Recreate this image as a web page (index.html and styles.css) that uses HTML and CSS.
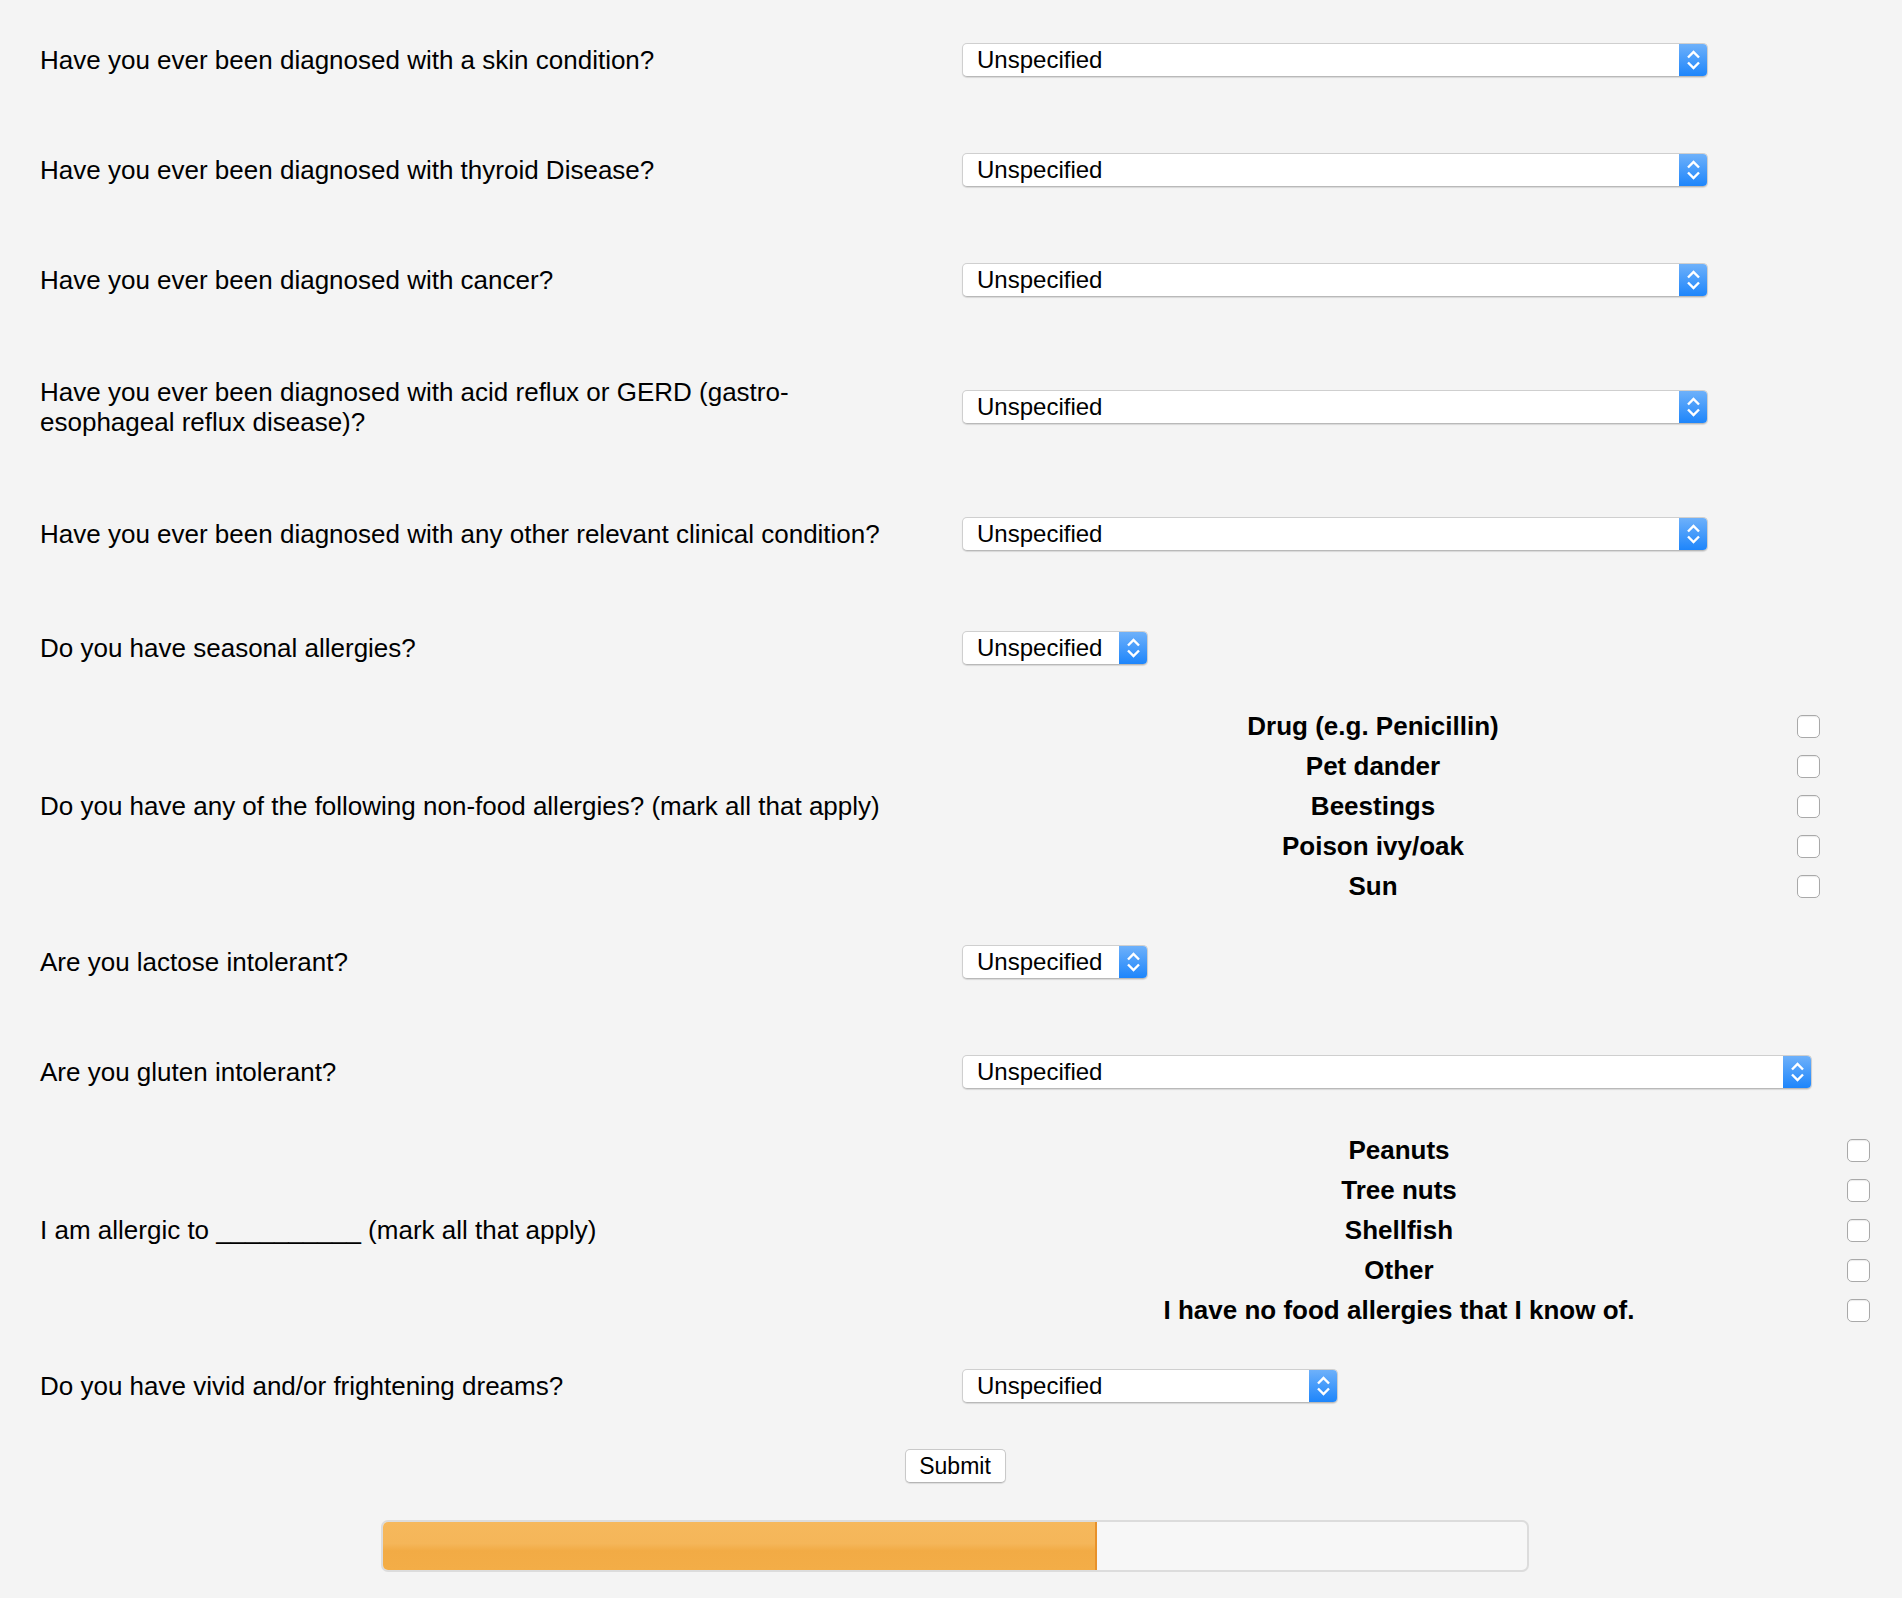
FILE: index.html
```html
<!DOCTYPE html>
<html lang="en">
<head>
<meta charset="utf-8">
<title>Health questionnaire</title>
<link rel="stylesheet" href="styles.css">
</head>
<body>
<div class="page">
  <form class="survey">
    <div class="q">
      <div class="q-label">Have you ever been diagnosed with a skin condition?</div>
      <div class="select select--full"><span class="select-text">Unspecified</span><span class="select-btn"><svg width="29" height="34" viewBox="0 0 29 34"><path d="M9 14.5 L14.5 9 L20 14.5 M9 19.5 L14.5 25 L20 19.5" fill="none" stroke="#fff" stroke-width="2.4"/></svg></span></div>
    </div>
    <div class="q">
      <div class="q-label">Have you ever been diagnosed with thyroid Disease?</div>
      <div class="select select--full"><span class="select-text">Unspecified</span><span class="select-btn"><svg width="29" height="34" viewBox="0 0 29 34"><path d="M9 14.5 L14.5 9 L20 14.5 M9 19.5 L14.5 25 L20 19.5" fill="none" stroke="#fff" stroke-width="2.4"/></svg></span></div>
    </div>
    <div class="q">
      <div class="q-label">Have you ever been diagnosed with cancer?</div>
      <div class="select select--full"><span class="select-text">Unspecified</span><span class="select-btn"><svg width="29" height="34" viewBox="0 0 29 34"><path d="M9 14.5 L14.5 9 L20 14.5 M9 19.5 L14.5 25 L20 19.5" fill="none" stroke="#fff" stroke-width="2.4"/></svg></span></div>
    </div>
    <div class="q q--loose">
      <div class="q-label">Have you ever been diagnosed with acid reflux or GERD (gastro-esophageal reflux disease)?</div>
      <div class="select select--full"><span class="select-text">Unspecified</span><span class="select-btn"><svg width="29" height="34" viewBox="0 0 29 34"><path d="M9 14.5 L14.5 9 L20 14.5 M9 19.5 L14.5 25 L20 19.5" fill="none" stroke="#fff" stroke-width="2.4"/></svg></span></div>
    </div>
    <div class="q q--loose">
      <div class="q-label">Have you ever been diagnosed with any other relevant clinical condition?</div>
      <div class="select select--full"><span class="select-text">Unspecified</span><span class="select-btn"><svg width="29" height="34" viewBox="0 0 29 34"><path d="M9 14.5 L14.5 9 L20 14.5 M9 19.5 L14.5 25 L20 19.5" fill="none" stroke="#fff" stroke-width="2.4"/></svg></span></div>
    </div>
    <div class="q q--loose">
      <div class="q-label">Do you have seasonal allergies?</div>
      <div class="select select--short"><span class="select-text">Unspecified</span><span class="select-btn"><svg width="29" height="34" viewBox="0 0 29 34"><path d="M9 14.5 L14.5 9 L20 14.5 M9 19.5 L14.5 25 L20 19.5" fill="none" stroke="#fff" stroke-width="2.4"/></svg></span></div>
    </div>
    <div class="q q--checks">
      <div class="q-label">Do you have any of the following non-food allergies? (mark all that apply)</div>
      <div class="checks checks--nonfood">
        <span class="check-label">Drug (e.g. Penicillin)</span><span class="box"></span>
        <span class="check-label">Pet dander</span><span class="box"></span>
        <span class="check-label">Beestings</span><span class="box"></span>
        <span class="check-label">Poison ivy/oak</span><span class="box"></span>
        <span class="check-label">Sun</span><span class="box"></span>
      </div>
    </div>
    <div class="q">
      <div class="q-label">Are you lactose intolerant?</div>
      <div class="select select--short"><span class="select-text">Unspecified</span><span class="select-btn"><svg width="29" height="34" viewBox="0 0 29 34"><path d="M9 14.5 L14.5 9 L20 14.5 M9 19.5 L14.5 25 L20 19.5" fill="none" stroke="#fff" stroke-width="2.4"/></svg></span></div>
    </div>
    <div class="q">
      <div class="q-label">Are you gluten intolerant?</div>
      <div class="select select--wide"><span class="select-text">Unspecified</span><span class="select-btn"><svg width="29" height="34" viewBox="0 0 29 34"><path d="M9 14.5 L14.5 9 L20 14.5 M9 19.5 L14.5 25 L20 19.5" fill="none" stroke="#fff" stroke-width="2.4"/></svg></span></div>
    </div>
    <div class="q q--checks">
      <div class="q-label">I am allergic to __________ (mark all that apply)</div>
      <div class="checks checks--food">
        <span class="check-label">Peanuts</span><span class="box"></span>
        <span class="check-label">Tree nuts</span><span class="box"></span>
        <span class="check-label">Shellfish</span><span class="box"></span>
        <span class="check-label">Other</span><span class="box"></span>
        <span class="check-label">I have no food allergies that I know of.</span><span class="box"></span>
      </div>
    </div>
    <div class="q">
      <div class="q-label">Do you have vivid and/or frightening dreams?</div>
      <div class="select select--mid"><span class="select-text">Unspecified</span><span class="select-btn"><svg width="29" height="34" viewBox="0 0 29 34"><path d="M9 14.5 L14.5 9 L20 14.5 M9 19.5 L14.5 25 L20 19.5" fill="none" stroke="#fff" stroke-width="2.4"/></svg></span></div>
    </div>
  </form>
  <div class="actions"><button type="button" class="submit">Submit</button></div>
  <div class="progress"><div class="progress-fill" style="width: 62.4%"></div></div>
</div>
</body>
</html>
```
FILE: styles.css
```css
html, body {
  margin: 0;
  padding: 0;
  background: #f4f4f4;
}

body {
  font-family: "Liberation Sans", Arial, Helvetica, sans-serif;
  color: #000;
}

.page {
  padding-left: 8px;
}

.survey {
  display: flex;
  flex-direction: column;
  padding-top: 43px;
}

.q {
  display: grid;
  grid-template-columns: 922px 1fr;
  align-items: center;
  padding-left: 32px;
  margin-top: 76px;
}

.q:first-child {
  margin-top: 0;
}

.q--loose {
  margin-top: 80px;
}

.q--checks {
  margin-top: 41px;
}

.q--checks + .q {
  margin-top: 39px;
}

.q-label {
  font-size: 26px;
  line-height: 30px;
  max-width: 860px;
}

.select {
  display: flex;
  align-items: stretch;
  height: 34px;
  box-sizing: border-box;
  background: #fff;
  border: 1px solid #cfcfcf;
  border-bottom-color: #b9b9b9;
  border-radius: 5px;
  box-shadow: 0 1px 1px rgba(0, 0, 0, 0.12);
  overflow: hidden;
}

.select--full { width: 746px; }
.select--short { width: 186px; }
.select--wide { width: 850px; }
.select--mid { width: 376px; }

.select-text {
  flex: 1;
  display: flex;
  align-items: center;
  padding-left: 14px;
  font-size: 24px;
}

.select-btn {
  width: 29px;
  margin: -1px -1px -1px 0;
  background: linear-gradient(#70b2fa, #1b84fb);
  display: flex;
  align-items: center;
  justify-content: center;
  border-radius: 0 5px 5px 0;
}

.select-btn svg {
  display: block;
}

.checks {
  display: grid;
  grid-auto-rows: 40px;
  align-items: center;
}

.checks--nonfood {
  grid-template-columns: 822px 23px;
  column-gap: 13px;
}

.checks--food {
  grid-template-columns: 874px 23px;
  column-gap: 11px;
}

.check-label {
  text-align: center;
  font-weight: bold;
  font-size: 26px;
  line-height: 30px;
}

.box {
  display: block;
  width: 23px;
  height: 23px;
  box-sizing: border-box;
  background: #fff;
  border: 1px solid #a9a9a9;
  border-radius: 5px;
  box-shadow: inset 0 1px 1px rgba(0, 0, 0, 0.08);
}

.actions {
  display: flex;
  justify-content: center;
  margin-top: 46px;
}

.submit {
  width: 101px;
  height: 34px;
  background: #fff;
  border: 1px solid #c9c9c9;
  border-bottom-color: #b5b5b5;
  border-radius: 5px;
  box-shadow: 0 1px 1px rgba(0, 0, 0, 0.1);
  font-family: "Liberation Sans", Arial, Helvetica, sans-serif;
  font-size: 23px;
  color: #000;
  padding: 0;
}

.progress {
  width: 1148px;
  height: 52px;
  box-sizing: border-box;
  margin: 37px auto 0;
  border: 2px solid #dcdcdc;
  border-radius: 7px;
  background: #f7f7f7;
  overflow: hidden;
}

.progress-fill {
  height: 100%;
  background: linear-gradient(#f6b85c 0%, #f5b659 45%, #f2ab45 60%, #f3ad47 100%);
  border-right: 2px solid #e8912a;
  box-sizing: border-box;
}
```
